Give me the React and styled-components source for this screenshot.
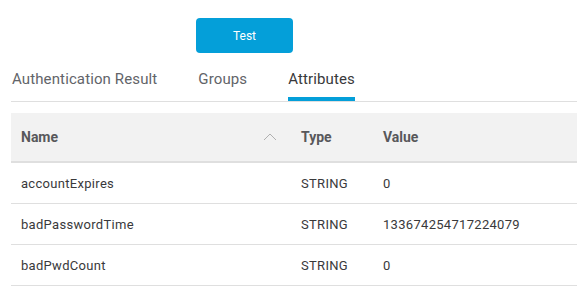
import styled, { createGlobalStyle } from "styled-components";

const GlobalStyle = createGlobalStyle`
  body {
    margin: 0;
    background: #ffffff;
    font-family: Roboto, "Liberation Sans", Arial, sans-serif;
  }
`;

const Page = styled.div`
  padding-top: 18px;
`;

const ButtonRow = styled.div`
  padding-left: 196px;
`;

const TestBtn = styled.button`
  width: 97px;
  height: 35px;
  border: none;
  border-radius: 4px;
  background-color: #049fd9;
  color: #ffffff;
  font-family: Roboto, "Liberation Sans", Arial, sans-serif;
  font-size: 12px;
  cursor: pointer;
`;

const TabBar = styled.div`
  display: flex;
  gap: 41px;
  margin-left: 11px;
  padding-left: 1px;
  border-bottom: 1px solid #dfdfdf;
`;

const Tab = styled.div`
  padding: 17px 0 9px;
  font-size: 15px;
  line-height: 18px;
  letter-spacing: 0.12px;
  color: ${(p) => (p.$active ? "#39393b" : "#626469")};
  border-bottom: 4px solid ${(p) => (p.$active ? "#049fd9" : "transparent")};
  cursor: pointer;
`;

const Table = styled.table`
  margin: 11px 0 0 11px;
  width: 566px;
  border-collapse: collapse;
  table-layout: fixed;
`;

const Th = styled.th`
  width: ${(p) => p.$w || "auto"};
  height: 48px;
  padding: 0 10px;
  background: #f2f2f2;
  border-bottom: 2px solid #dfdfdf;
  text-align: left;
  font-size: 14px;
  font-weight: 700;
  color: #58585b;
  position: relative;
`;

const Caret = styled.svg`
  position: absolute;
  right: 14px;
  top: 20px;
`;

const Td = styled.td`
  height: 40px;
  padding: 0 10px;
  border-bottom: 1px solid #dfdfdf;
  font-size: 13px;
  letter-spacing: 0.3px;
  color: #39393b;
`;

const rows = [
  { name: "accountExpires", type: "STRING", value: "0" },
  { name: "badPasswordTime", type: "STRING", value: "133674254717224079" },
  { name: "badPwdCount", type: "STRING", value: "0" },
];

export default function App() {
  return (
    <Page>
      <GlobalStyle />
      <ButtonRow>
        <TestBtn>Test</TestBtn>
      </ButtonRow>
      <TabBar>
        <Tab>Authentication Result</Tab>
        <Tab>Groups</Tab>
        <Tab $active>Attributes</Tab>
      </TabBar>
      <Table>
        <thead>
          <tr>
            <Th $w="260px">
              Name
              <Caret width="14" height="8" viewBox="0 0 14 8">
                <path d="M1 7 L7 1 L13 7" fill="none" stroke="#b0b0b0" strokeWidth="1" />
              </Caret>
            </Th>
            <Th $w="62px">Type</Th>
            <Th>Value</Th>
          </tr>
        </thead>
        <tbody>
          {rows.map((r) => (
            <tr key={r.name}>
              <Td>{r.name}</Td>
              <Td>{r.type}</Td>
              <Td>{r.value}</Td>
            </tr>
          ))}
        </tbody>
      </Table>
    </Page>
  );
}
